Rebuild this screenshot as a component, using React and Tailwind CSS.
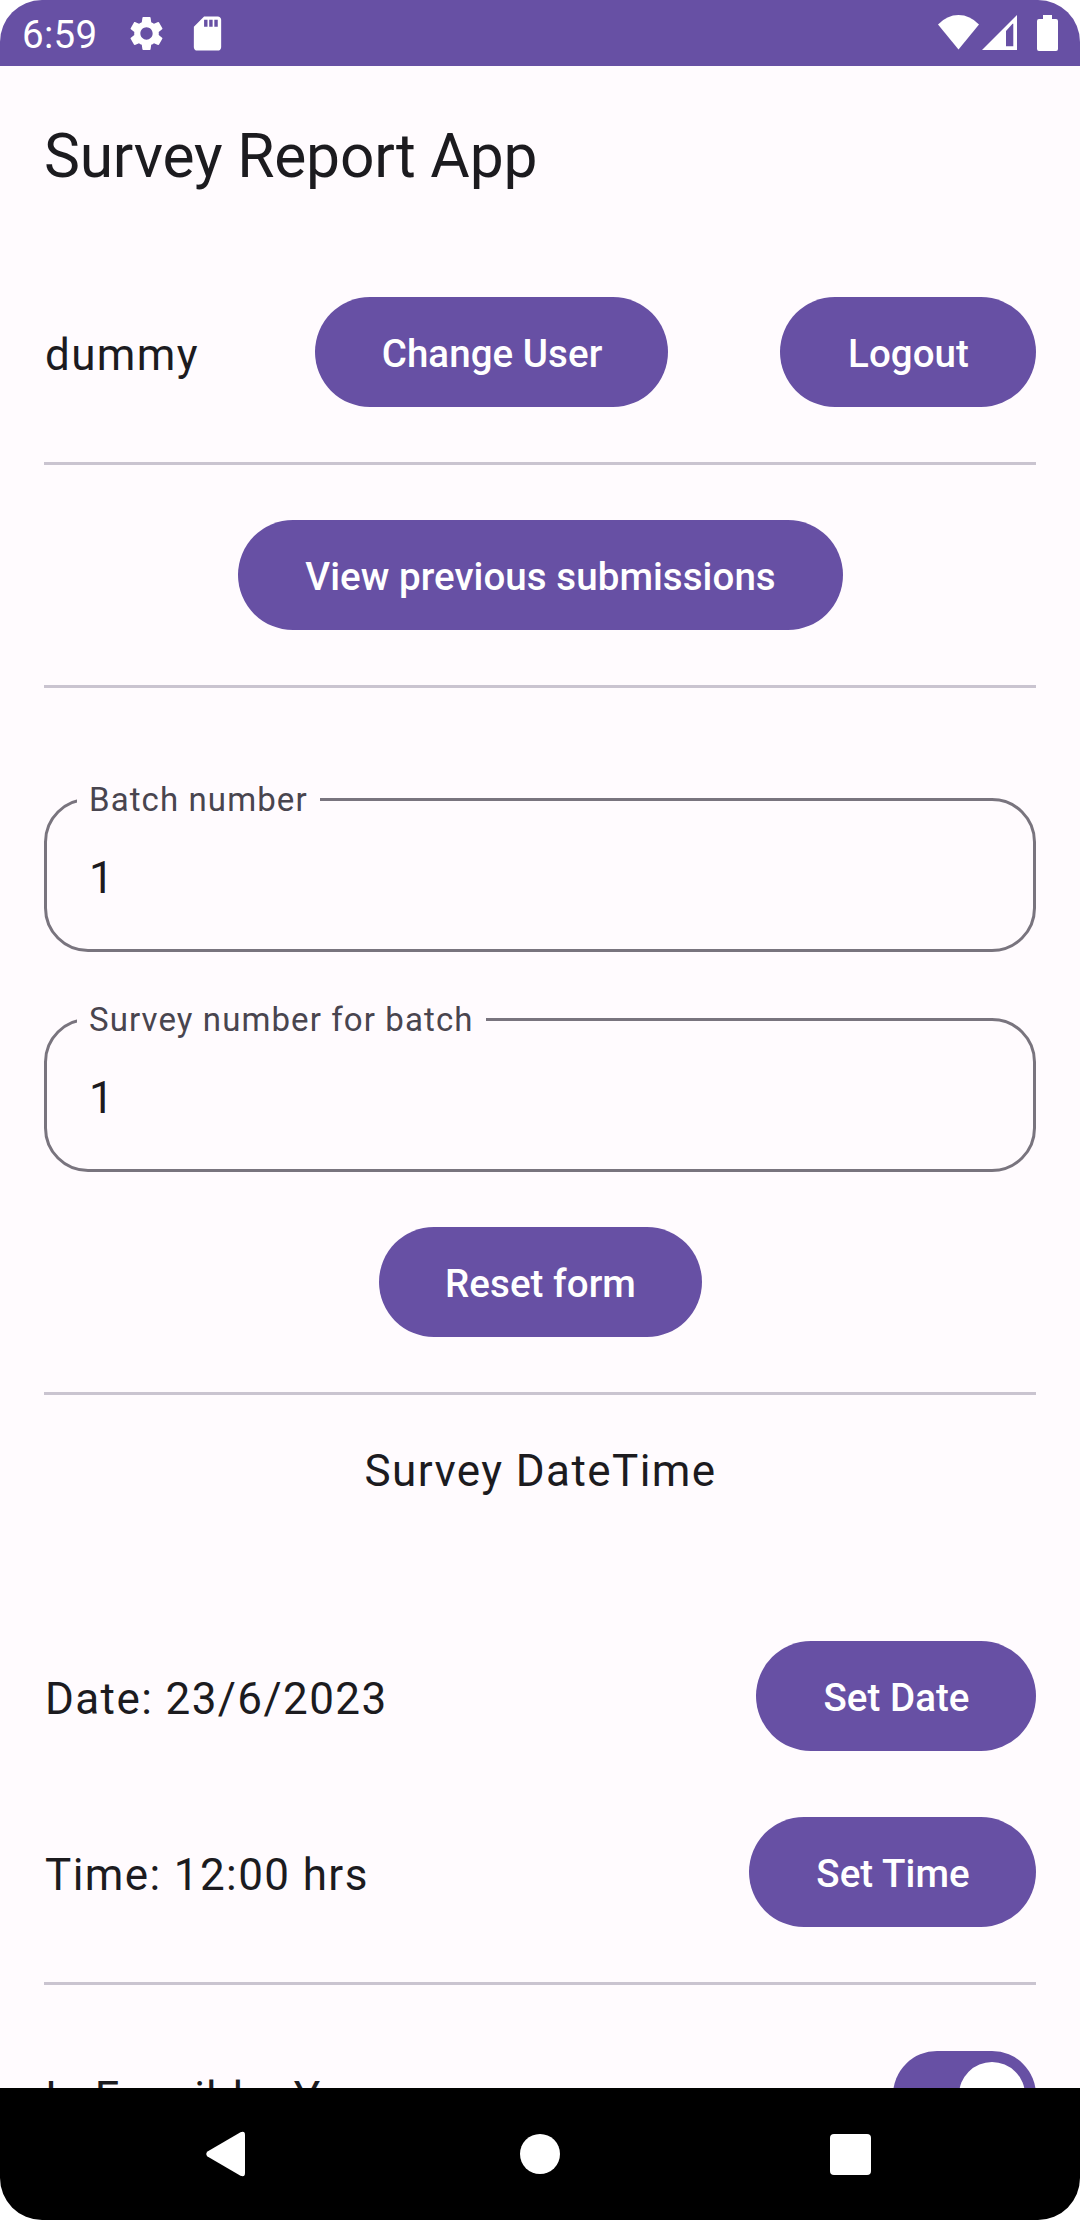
import React from "react";
import { MdSettings, MdSdCard } from "react-icons/md";

function Button({ children, className = "" }) {
  return (
    <button
      className={`flex h-[110px] shrink-0 items-center justify-center rounded-full bg-[#6750a4] pt-[3px] pl-px text-[38.5px] leading-[55px] font-medium tracking-[0.06px] whitespace-nowrap text-white ${className}`}
    >
      {children}
    </button>
  );
}

function Divider({ className = "" }) {
  return <div className={`h-[3px] shrink-0 bg-[#cac4d0] ${className}`} />;
}

function Body({ children, className = "" }) {
  return (
    <span className={`text-[44px] leading-[66px] tracking-[1.4px] whitespace-nowrap ${className}`}>
      {children}
    </span>
  );
}

function OutlinedField({ label, value, labelWidth, className = "" }) {
  return (
    <div
      className={`relative flex h-[154px] shrink-0 items-center rounded-[44px] border-[3px] border-[#79747e] pl-[42px] ${className}`}
    >
      <label
        className={`absolute -top-[23px] left-[30px] h-[44px] bg-[#fffbfe] pl-[12px] text-[33px] leading-[44px] tracking-[1.1px] whitespace-nowrap text-[#49454f] ${labelWidth}`}
      >
        {label}
      </label>
      <Body className="pt-[6px]">{value}</Body>
    </div>
  );
}

function StatusBar() {
  return (
    <div className="flex h-[66px] shrink-0 items-center bg-[#6750a4] pl-[22px] text-white">
      <span className="w-[104px] pt-[3px] text-[38.5px] leading-[45px] tracking-[0.3px]">6:59</span>
      <MdSettings className="size-[41px]" />
      <MdSdCard className="ml-[20px] size-[41px]" />
      <div className="ml-auto flex pr-[22px]">
        <svg className="h-[36px] w-[41px]" viewBox="0 0 41 36" fill="currentColor">
          <path d="M0 9.5Q9 0 20.500 0T41 9.500L20.500 34.500Z" />
        </svg>
        <svg className="ml-[3px] h-[36px] w-[35px]" viewBox="0 0 35 36" fill="currentColor">
          <path fillRule="evenodd" d="M0 35L35 0V35ZM24 16V31.200H31.300V8.700H30.500Z" />
        </svg>
        <svg className="ml-[20px] h-[36px] w-[21px]" viewBox="0 0 21 36" fill="currentColor">
          <path d="M6 0H15V4H19Q21 4 21 6V34Q21 36 19 36H2Q0 36 0 34V6Q0 4 2 4H6Z" />
        </svg>
      </div>
    </div>
  );
}

function NavBar() {
  return (
    <div className="flex h-[132px] shrink-0 items-center bg-black pl-[206px] text-white">
      <svg className="h-[46px] w-[39px]" viewBox="0 0 39 46" fill="currentColor">
        <path d="M1.500 20.500L34.500 1.200Q39-.5 39 4V42Q39 46.500 34.500 44.800L1.500 25.500Q-1 23 1.500 20.500Z" />
      </svg>
      <div className="ml-[275px] size-[40px] rounded-full bg-white" />
      <div className="ml-[270px] size-[41px] rounded-[4px] bg-white" />
    </div>
  );
}

export default function App() {
  return (
    <div className="h-[2220px] w-[1080px] bg-white">
      <div className="flex h-full flex-col overflow-hidden rounded-[42px] bg-[#fffbfe] font-[Roboto,sans-serif] text-[#1c1b1f]">
        <StatusBar />
        <main className="flex min-h-0 flex-1 flex-col overflow-hidden px-[44px]">
          <h1 className="mt-[52px] h-[77px] shrink-0 text-[60.5px] leading-[77px] tracking-[-0.2px]">
            Survey Report App
          </h1>

          <div className="mt-[102px] flex h-[110px] shrink-0 items-center justify-between">
            <Body className="pt-[6px] pr-[4px] pl-px">dummy</Body>
            <Button className="w-[353px]">Change User</Button>
            <Button className="w-[256px]">Logout</Button>
          </div>
          <Divider className="mt-[55px]" />

          <Button className="mt-[55px] w-[605px] self-center">View previous submissions</Button>
          <Divider className="mt-[55px]" />

          <OutlinedField className="mt-[110px]" labelWidth="w-[243px]" label="Batch number" value="1" />
          <OutlinedField className="mt-[66px]" labelWidth="w-[409px]" label="Survey number for batch" value="1" />

          <Button className="mt-[55px] w-[323px] self-center">Reset form</Button>
          <Divider className="mt-[55px]" />

          <Body className="mt-[43px] h-[66px] shrink-0 self-center pl-px">Survey DateTime</Body>

          <div className="mt-[137px] flex h-[110px] shrink-0 items-center justify-between">
            <Body className="pt-[6px] pl-px">Date: 23/6/2023</Body>
            <Button className="w-[280px]">Set Date</Button>
          </div>
          <div className="mt-[66px] flex h-[110px] shrink-0 items-center justify-between">
            <Body className="pt-[6px] pl-px">Time: 12:00 hrs</Body>
            <Button className="w-[287px]">Set Time</Button>
          </div>
          <Divider className="mt-[55px]" />

          <div className="mt-[66px] flex h-[88px] shrink-0 items-center justify-between">
            <Body className="pt-[6px] pl-px">Is Feasible: Yes</Body>
            <div className="flex h-[88px] w-[143px] items-center justify-end rounded-full bg-[#6750a4] pr-[11px]">
              <div className="size-[66px] rounded-full bg-white" />
            </div>
          </div>
        </main>
        <NavBar />
      </div>
    </div>
  );
}
